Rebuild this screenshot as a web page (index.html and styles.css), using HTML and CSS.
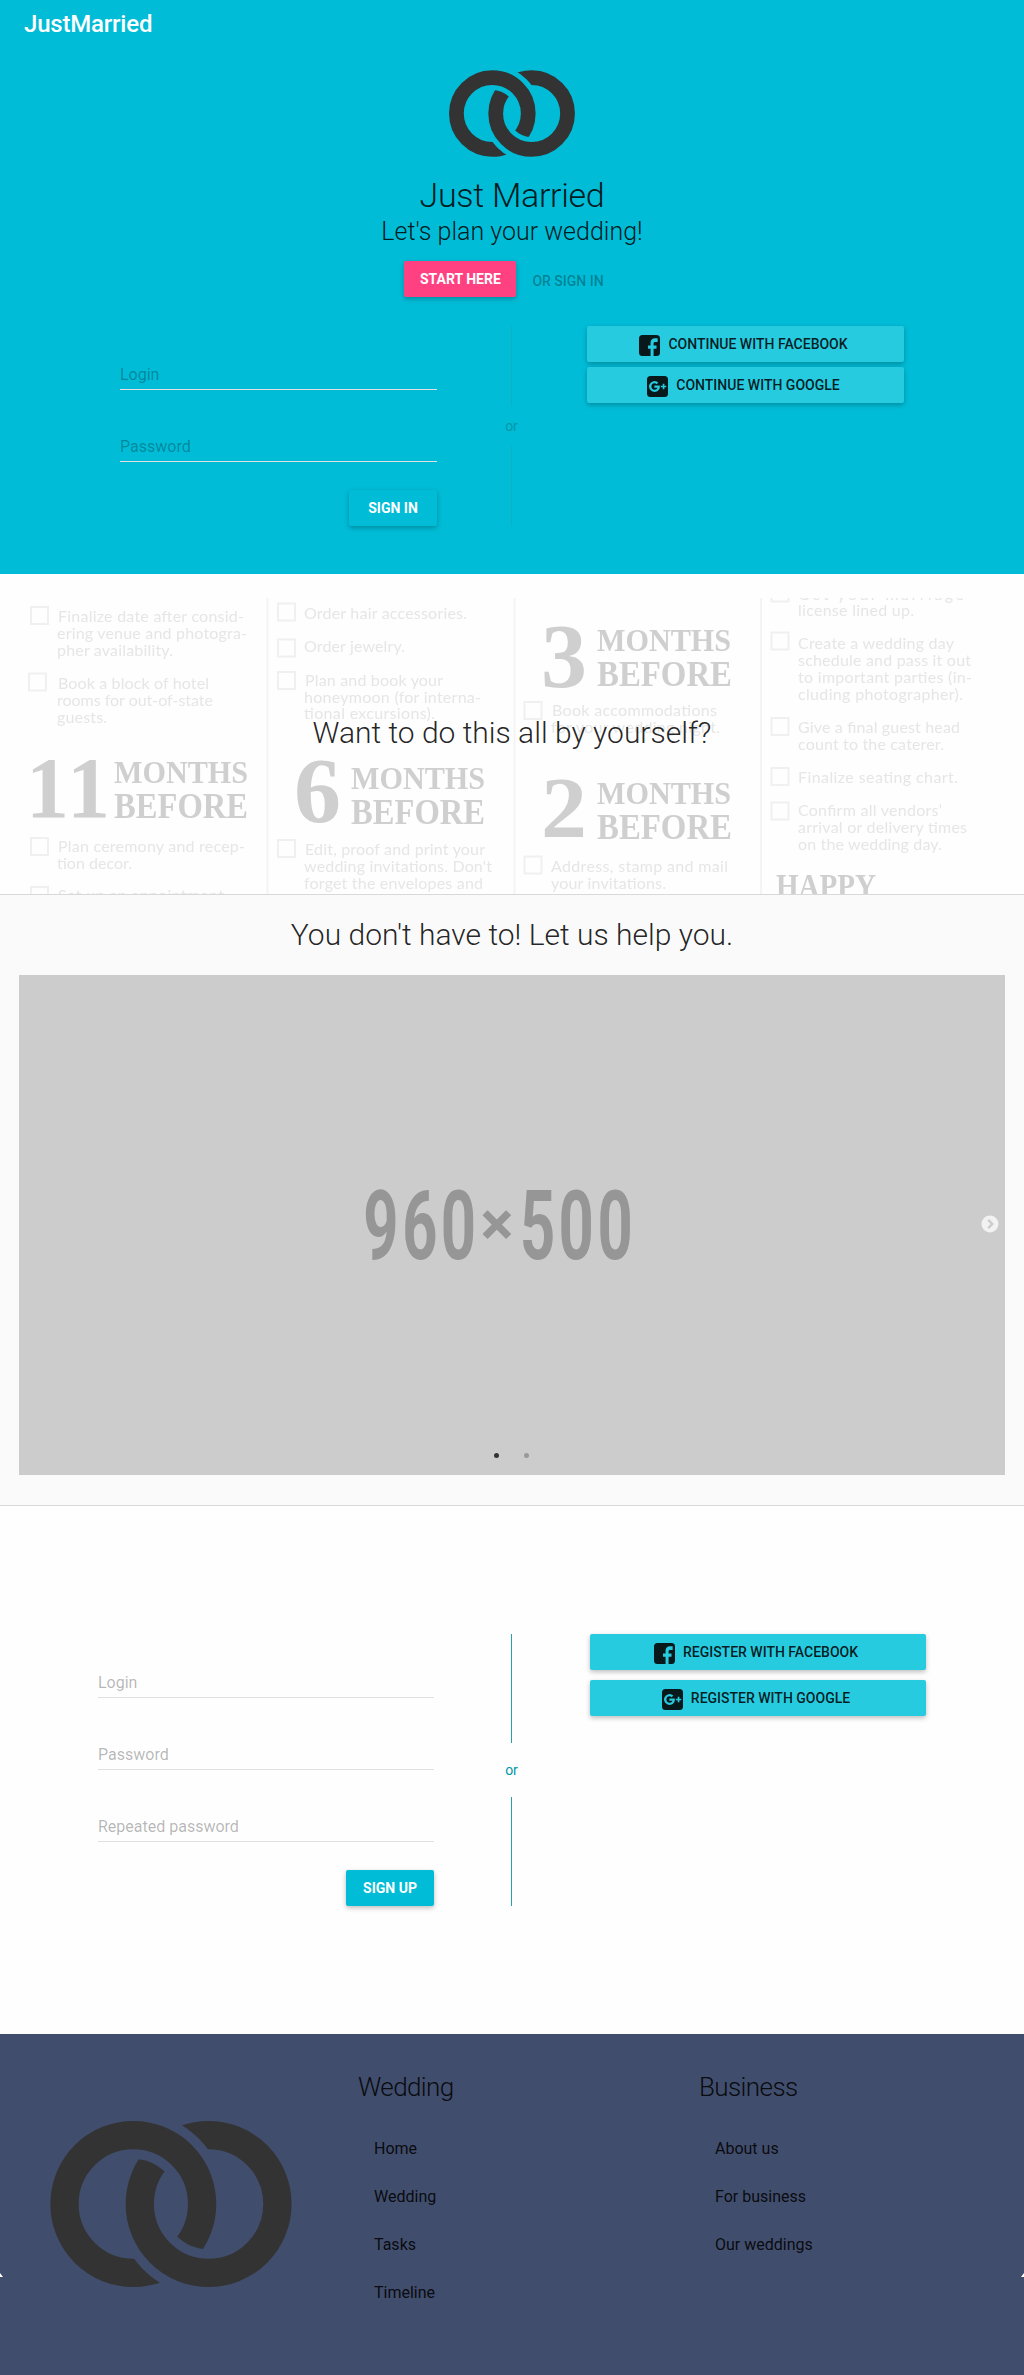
FILE: index.html
```html
<!DOCTYPE html>
<html lang="en">
<head>
<meta charset="utf-8">
<title>JustMarried</title>
<link rel="stylesheet" href="styles.css">
</head>
<body>
<svg class="defs" width="0" height="0" aria-hidden="true">
  <defs>
    <mask id="cut-top" maskUnits="userSpaceOnUse" x="-5" y="-5" width="252" height="176">
      <rect x="-5" y="-5" width="252" height="176" fill="#fff"/>
      <path d="M14.2 83A68.8 68.8 0 0 1 151.8 83" fill="none" stroke="#000" stroke-width="47.4"/>
    </mask>
    <mask id="cut-bottom" maskUnits="userSpaceOnUse" x="-5" y="-5" width="252" height="176">
      <rect x="-5" y="-5" width="252" height="176" fill="#fff"/>
      <path d="M89.5 83A68.8 68.8 0 0 0 227.1 83" fill="none" stroke="#000" stroke-width="47.4"/>
    </mask>
    <symbol id="rings" viewBox="0 0 241.4 166">
      <g fill="none" stroke="#333" stroke-width="28.3">
        <circle cx="83" cy="83" r="68.8" mask="url(#cut-bottom)"/>
        <circle cx="158.3" cy="83" r="68.8" mask="url(#cut-top)"/>
      </g>
    </symbol>
    <symbol id="facebook" viewBox="3 3 18 18">
      <path d="M6 3h12a3 3 0 0 1 3 3v12a3 3 0 0 1-3 3h-2.500v-6.200h2.500v-2.700h-2.500v-1.700c0-.9.400-1.400 1.400-1.400H19V5.800h-2.300c-2.300 0-3.800 1.400-3.800 3.700v2.600h-2.200v2.700h2.200V21H6a3 3 0 0 1-3-3V6a3 3 0 0 1 3-3z"/>
    </symbol>
    <symbol id="google" viewBox="3 3 18 18">
      <path fill-rule="evenodd" d="M6 3h12a3 3 0 0 1 3 3v12a3 3 0 0 1-3 3H6a3 3 0 0 1-3-3V6a3 3 0 0 1 3-3zm13.500 8.300H17.900V9.700h-1.400v1.600h-1.600v1.400h1.600v1.600h1.400v-1.600h1.600zM9.300 11.100v1.900h2.700c-.3 1-1.200 1.700-2.500 1.700a2.700 2.700 0 0 1 0-5.400c.7 0 1.300.2 1.800.7l1.400-1.400a4.700 4.700 0 1 0-3.200 8.100c2.700 0 4.500-1.900 4.500-4.600 0-.3 0-.7-.1-1z"/>
    </symbol>
  </defs>
</svg>

<header class="hero">
  <nav class="toolbar"><a class="brand">JustMarried</a></nav>
  <svg class="hero-logo"><use href="#rings"/></svg>
  <h1 class="title">Just Married</h1>
  <p class="subtitle">Let's plan your wedding!</p>
  <div class="cta">
    <button class="btn btn-accent">Start here</button>
    <span class="cta-note">or sign in</span>
  </div>
  <div class="auth auth-login">
    <form class="form">
      <label class="field"><span>Login</span></label>
      <label class="field"><span>Password</span></label>
      <button class="btn btn-primary" type="button">Sign in</button>
    </form>
    <div class="divider"><i></i><span>or</span><i></i></div>
    <div class="social">
      <button class="btn btn-social"><svg><use href="#facebook"/></svg><span>Continue with Facebook</span></button>
      <button class="btn btn-social"><svg><use href="#google"/></svg><span>Continue with Google</span></button>
    </div>
  </div>
</header>

<section class="checklist">
  <svg class="checklist-art" viewBox="0 38 1024 296">
    <g class="rules">
      <path d="M267.500 38V340M514.500 38V340M761 38V340"/>
    </g>
    <g class="boxes">
      <rect x="31" y="47" width="17" height="17"/><rect x="29" y="113.500" width="17" height="17"/><rect x="31" y="278" width="17" height="17"/><rect x="31" y="327" width="17" height="17"/>
      <rect x="278" y="43.500" width="17" height="17"/><rect x="278" y="79.500" width="17" height="17"/><rect x="278" y="112" width="17" height="17"/><rect x="278" y="280" width="17" height="17"/>
      <rect x="524.500" y="142" width="17" height="17"/><rect x="524.500" y="296.500" width="17" height="17"/>
      <rect x="771.500" y="24.500" width="17" height="17"/><rect x="771.500" y="72.500" width="17" height="17"/><rect x="771.500" y="158" width="17" height="17"/><rect x="771.500" y="208" width="17" height="17"/><rect x="771.500" y="242.500" width="17" height="17"/>
    </g>
    <g class="tasks">
      <text x="58" y="62" textLength="186">Finalize date after consid-</text>
      <text x="57" y="79" textLength="190">ering venue and photogra-</text>
      <text x="57" y="96" textLength="116">pher availability.</text>
      <text x="58" y="129" textLength="151">Book a block of hotel</text>
      <text x="57" y="146" textLength="156">rooms for out-of-state</text>
      <text x="57" y="163" textLength="50">guests.</text>
      <text x="58" y="292" textLength="187">Plan ceremony and recep-</text>
      <text x="57" y="309" textLength="75">tion decor.</text>
      <text x="58" y="341" textLength="166">Set up an appointment</text>
      <text x="304" y="59" textLength="163">Order hair accessories.</text>
      <text x="304" y="92" textLength="101">Order jewelry.</text>
      <text x="305" y="126" textLength="138">Plan and book your</text>
      <text x="304" y="143" textLength="177">honeymoon (for interna-</text>
      <text x="304" y="159" textLength="131">tional excursions).</text>
      <text x="305" y="295" textLength="180">Edit, proof and print your</text>
      <text x="304" y="312" textLength="188">wedding invitations. Don't</text>
      <text x="304" y="329" textLength="179">forget the envelopes and</text>
      <text x="552" y="156" textLength="165">Book accommodations</text>
      <text x="551" y="173" textLength="169">for your wedding night.</text>
      <text x="551" y="312" textLength="177">Address, stamp and mail</text>
      <text x="551" y="329" textLength="115">your invitations.</text>
      <text x="798" y="40" textLength="166">Get your marriage</text>
      <text x="798" y="56" textLength="116">license lined up.</text>
      <text x="798" y="89" textLength="156">Create a wedding day</text>
      <text x="798" y="106" textLength="173">schedule and pass it out</text>
      <text x="798" y="123" textLength="174">to important parties (in-</text>
      <text x="798" y="140" textLength="165">cluding photographer).</text>
      <text x="798" y="173" textLength="162">Give a final guest head</text>
      <text x="798" y="190" textLength="146">count to the caterer.</text>
      <text x="798" y="223" textLength="160">Finalize seating chart.</text>
      <text x="798" y="256" textLength="144">Confirm all vendors’</text>
      <text x="798" y="273" textLength="169">arrival or delivery times</text>
      <text x="798" y="290" textLength="144">on the wedding day.</text>
    </g>
    <g class="months">
      <text x="26" y="257" font-size="86" textLength="84" lengthAdjust="spacing">11</text>
      <text x="114" y="223" font-size="32" textLength="134" lengthAdjust="spacingAndGlyphs">MONTHS</text>
      <text x="114" y="258" font-size="35" textLength="134" lengthAdjust="spacingAndGlyphs">BEFORE</text>
      <text x="294" y="262" font-size="93" textLength="47" lengthAdjust="spacingAndGlyphs">6</text>
      <text x="351" y="229" font-size="32" textLength="134" lengthAdjust="spacingAndGlyphs">MONTHS</text>
      <text x="351" y="264" font-size="35" textLength="134" lengthAdjust="spacingAndGlyphs">BEFORE</text>
      <text x="541" y="127" font-size="91" textLength="46" lengthAdjust="spacingAndGlyphs">3</text>
      <text x="597" y="91" font-size="32" textLength="134" lengthAdjust="spacingAndGlyphs">MONTHS</text>
      <text x="597" y="126" font-size="35" textLength="135" lengthAdjust="spacingAndGlyphs">BEFORE</text>
      <text x="541" y="277" font-size="86" textLength="46" lengthAdjust="spacingAndGlyphs">2</text>
      <text x="597" y="244" font-size="32" textLength="134" lengthAdjust="spacingAndGlyphs">MONTHS</text>
      <text x="597" y="279" font-size="35" textLength="135" lengthAdjust="spacingAndGlyphs">BEFORE</text>
      <text x="776" y="337" font-size="34" textLength="100" lengthAdjust="spacingAndGlyphs">HAPPY</text>
    </g>
  </svg>
  <h2 class="headline">Want to do this all by yourself?</h2>
</section>

<section class="help">
  <h2 class="headline">You don't have to! Let us help you.</h2>
  <div class="carousel">
    <svg class="slide" viewBox="0 0 986 500">
      <text transform="scale(.64 1)" y="284" x="538 599 659">960</text>
      <text class="times" x="478" y="270">×</text>
      <text transform="scale(.64 1)" y="284" x="783 843 904">500</text>
    </svg>
    <svg class="next" viewBox="0 0 18 18"><circle cx="9" cy="9" r="8.500"/><path d="M7.200 4.900 11.200 9l-4 4.100"/></svg>
    <div class="dots"><i class="on"></i><i></i></div>
  </div>
</section>

<section class="register">
  <div class="auth auth-register">
    <form class="form">
      <label class="field"><span>Login</span></label>
      <label class="field"><span>Password</span></label>
      <label class="field"><span>Repeated password</span></label>
      <button class="btn btn-primary" type="button">Sign up</button>
    </form>
    <div class="divider"><i></i><span>or</span><i></i></div>
    <div class="social">
      <button class="btn btn-social"><svg><use href="#facebook"/></svg><span>Register with Facebook</span></button>
      <button class="btn btn-social"><svg><use href="#google"/></svg><span>Register with Google</span></button>
    </div>
  </div>
</section>

<footer class="footer">
  <svg class="footer-logo"><use href="#rings"/></svg>
  <nav class="links">
    <h3>Wedding</h3>
    <a>Home</a><a>Wedding</a><a>Tasks</a><a>Timeline</a>
  </nav>
  <nav class="links">
    <h3>Business</h3>
    <a>About us</a><a>For business</a><a>Our weddings</a>
  </nav>
  <i class="nick nick-left"></i><i class="nick nick-right"></i>
</footer>
</body>
</html>
```
FILE: styles.css
```css
* { box-sizing: border-box; }
body { margin: 0; background: #fefefe; color: rgba(0,0,0,.87); font-family: Roboto, "Liberation Sans", sans-serif; }
h1, h2, h3, p { margin: 0; font-weight: 300; }
.defs { position: absolute; }

.hero { height: 574px; background: #00bcd7; display: flex; flex-direction: column; align-items: center; }
.toolbar { width: 100%; height: 48px; padding-left: 24px; display: flex; align-items: center; }
.brand { color: #fff; font-size: 24px; font-weight: 500; line-height: 48px; letter-spacing: -.2px; }
.hero-logo { width: 126px; height: 87px; margin-top: 22px; }
.title { margin-top: 18px; font-size: 34px; line-height: 40px; letter-spacing: -.3px; }
.subtitle { margin-top: 2px; font-size: 25px; line-height: 30px; }
.cta { margin-top: 14px; height: 36px; display: flex; gap: 16px; padding-right: 16px; }
.cta-note { color: rgba(0,0,0,.32); font-size: 14px; font-weight: 500; line-height: 40px; text-transform: uppercase; }

.btn { border: 0; border-radius: 2px; height: 36px; padding: 0; display: flex; align-items: center; justify-content: center; font: 500 14px/36px Roboto, "Liberation Sans", sans-serif; text-transform: uppercase; box-shadow: 0 2px 5px rgba(0,0,0,.26); }
.btn-accent { width: 112px; background: #ff4081; color: #fff; font-weight: 700; }
.btn-primary { width: 88px; margin: 28px 0 0 auto; background: #00bcd7; color: #fff; font-weight: 700; }
.btn-social { width: 100%; padding-right: 4px; background: #26cbe0; color: rgba(0,0,0,.87); }
.btn-social svg { width: 21px; height: 21px; margin: 3px 8px 0 0; fill: #07191b; }

.auth { display: grid; }
.auth-login { grid-template-columns: 317px 150px 317px; height: 200px; margin-top: 29px; }
.auth-register { grid-template-columns: 336px 156px 336px; height: 272px; }
.field { display: flex; flex-direction: column; justify-content: flex-end; height: 72px; padding-bottom: 1px; border-bottom: 1px solid #e0e0e0; font-size: 16px; line-height: 26px; color: rgba(0,0,0,.29); }
.field:first-child { height: 64px; }
.divider { display: flex; flex-direction: column; align-items: center; padding-right: 1px; font-size: 14px; color: #0097a7; }
.divider i { flex: 1; width: 1px; background: #289eae; }
.divider span { height: 54px; line-height: 54px; }
.auth-login .divider span { height: 40px; line-height: 40px; }
.auth-login .divider i { background: #0fafc5; }
.social { display: flex; flex-direction: column; gap: 10px; }
.auth-login .social { gap: 5px; }

.checklist { position: relative; height: 320px; padding-top: 24px; }
.checklist-art { display: block; width: 1024px; height: 296px; filter: blur(.6px); }
.rules { stroke: #f4f4f4; stroke-width: 2; }
.boxes { fill: none; stroke: #f0f0f0; stroke-width: 2; }
.tasks { fill: #e6e6e6; font: 16px Lato, sans-serif; }
.months { fill: #cfcfcf; font-family: "Liberation Serif", serif; font-weight: 700; }
.headline { font-size: 30px; line-height: 40px; text-align: center; }
.checklist .headline { position: absolute; left: 0; right: 0; top: 139px; }

.help { height: 612px; padding: 20px 19px 0; background: #fafafa; border: solid #d9d9d9; border-width: 1px 0; }
.carousel { position: relative; height: 500px; margin-top: 20px; background: #ccc; }
.slide { display: block; width: 100%; height: 500px; }
.slide text { font: 700 96px Roboto, sans-serif; fill: #969696; }
.slide .times { font: 700 62px Roboto, sans-serif; text-anchor: middle; }
.next { position: absolute; right: 6px; top: 240px; width: 18px; height: 18px; fill: #f2f2f2; }
.next path { fill: none; stroke: #ccc; stroke-width: 2.4; }
.dots { position: absolute; bottom: 17px; left: 475px; display: flex; gap: 25px; }
.dots i { width: 5px; height: 5px; border-radius: 50%; background: #999; }
.dots .on { background: #333; }

.register { height: 528px; padding: 128px 98px 0; }

.footer { position: relative; height: 341px; background: #404d6c; display: grid; grid-template-columns: 341px 341px 342px; }
.footer-logo { width: 242px; height: 166px; margin: 87px 0 0 50px; }
.links { padding: 32px 0 0 17px; display: flex; flex-direction: column; }
.links h3 { font-size: 26px; line-height: 42px; margin-bottom: 17px; letter-spacing: -.6px; }
.links a { padding-left: 16px; font-size: 16px; line-height: 48px; }
.nick { position: absolute; top: 239px; border-style: solid; border-color: transparent transparent #fff; }
.nick-left { left: 0; border-width: 0 3px 4px 0; }
.nick-right { right: 0; border-width: 0 0 4px 3px; }
```
